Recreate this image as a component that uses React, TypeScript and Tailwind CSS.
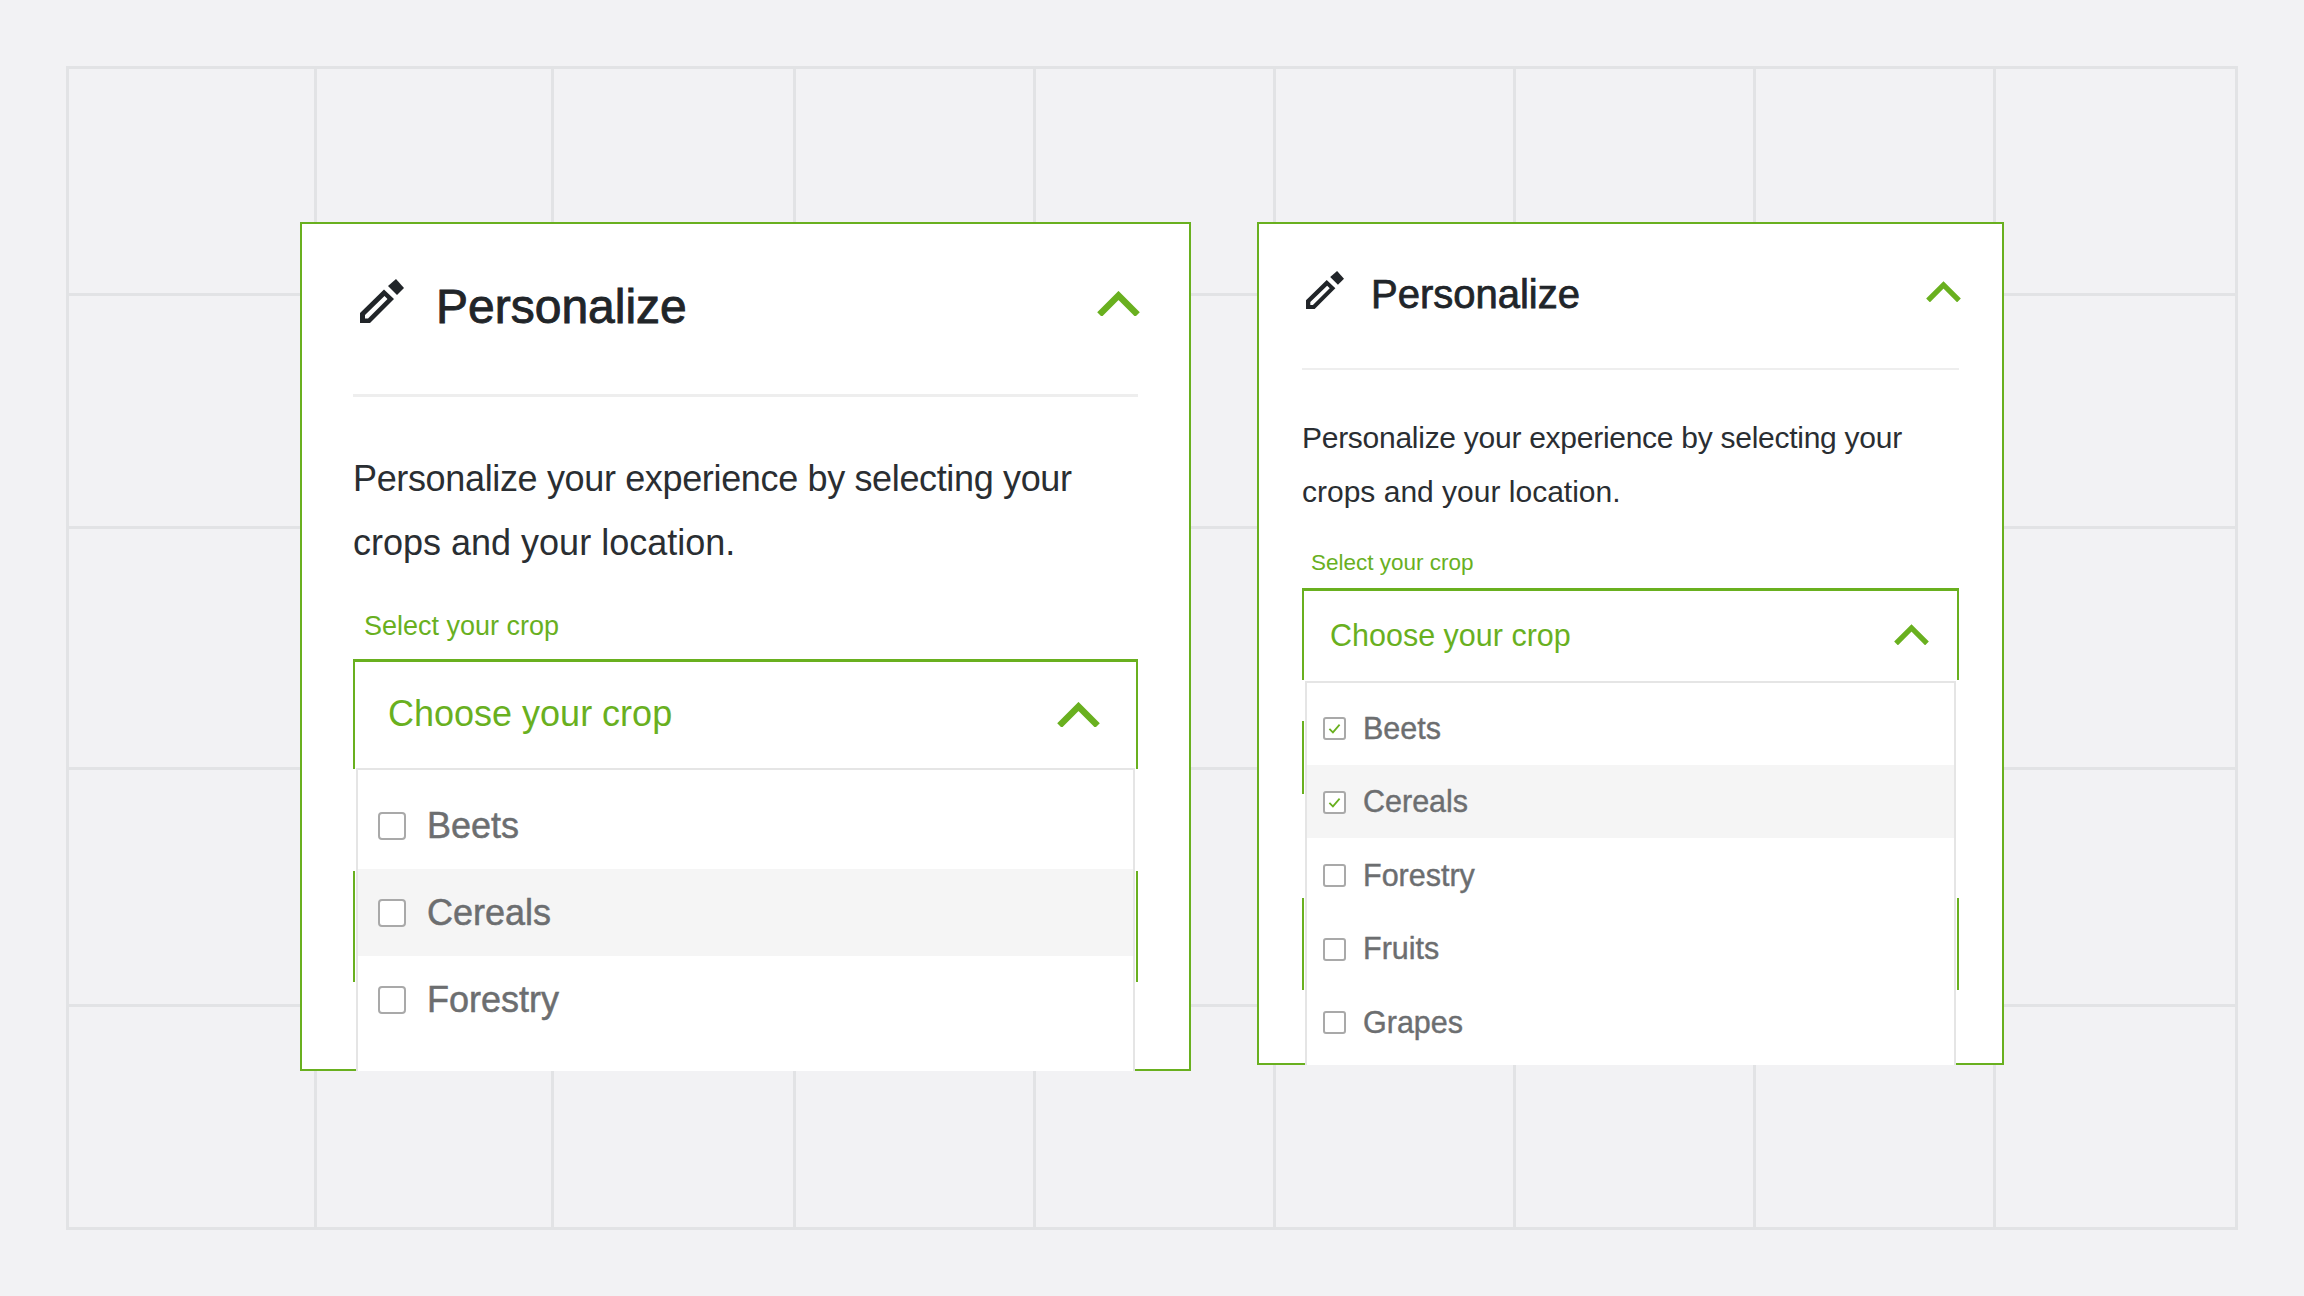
const colW = [248, 237, 242, 240, 240, 240, 240, 240, 239];
const rowH = [227, 233, 241, 237, 220];

function Pencil({ className }: { className: string }) {
  return (
    <svg viewBox="0 0 44 44" className={className} fill="#212529">
      <path
        fillRule="evenodd"
        d="M0 44V34L24 10.5 34 20 10 44ZM5 39.5H8L27.5 20 24.5 17 5 36Z"
      />
      <path d="M36 0 44 9 37 16 28 7Z" />
    </svg>
  );
}

function Chevron({ className }: { className: string }) {
  return (
    <svg viewBox="0 0 43 25" className={className} fill="none" stroke="#69b01f" strokeWidth="6.5">
      <path d="M2.5 23.5 21.5 4.5 40.5 23.5" />
    </svg>
  );
}

function Box({ checked, big }: { checked?: boolean; big?: boolean }) {
  return (
    <span
      className={
        big
          ? "flex h-[28px] w-[28px] shrink-0 items-center justify-center rounded-[4px] border-2 border-[#a9a9a9] bg-white"
          : "flex h-[23px] w-[23px] shrink-0 items-center justify-center rounded-[3px] border-2 border-[#a9a9a9] bg-white"
      }
    >
      {checked && (
        <svg viewBox="0 0 16 14" className="h-[11px] w-[13px]" fill="none" stroke="#69b01f" strokeWidth="2.2">
          <path d="M1.5 7.5 6 12 14.5 2" />
        </svg>
      )}
    </span>
  );
}

const BIG = {
  card: "relative h-[849px] w-[891px] shrink-0 border-2 border-[#69b01f] bg-white px-[51px]",
  header: "relative flex h-[173px] items-start border-b-[3px] border-[#eeeeee] pt-[55px]",
  pencil: "h-[44px] w-[44px] shrink-0 ml-[7px]",
  title: "ml-[32px] mt-[1px] text-[48px] leading-[54px] text-[#212529] [-webkit-text-stroke:0.9px_#212529]",
  topChevron: "absolute right-[-2px] top-[67px] h-[25px] w-[43px]",
  para: "mt-[50px] text-[36px] leading-[64px] text-[#2a2e32]",
  line1: "tracking-[-0.35px]",
  label: "mt-[31px] ml-[11px] text-[27px] leading-[40px] text-[#69b01f]",
  select: "mt-[13px] flex h-[110px] items-center justify-between border-x-2 border-t-[3px] border-[#69b01f] pb-[3px] pl-[33px] pr-[36px]",
  choose: "text-[36px] leading-[44px] text-[#69b01f]",
  chevron: "h-[25px] w-[43px]",
  menu: "absolute bottom-[-2px] left-[54px] right-[54px] top-[544px] overflow-hidden border-x-2 border-t-2 border-[#e5e5e5] bg-white pt-[12px]",
  row: "flex h-[87px] items-center gap-[21px] pl-[20px] pt-[1px] text-[36px] text-[#6c6e70] [-webkit-text-stroke:0.5px_#6c6e70]",
  rowHover: "flex h-[87px] items-center gap-[21px] bg-[#f5f5f5] pl-[20px] pt-[1px] text-[36px] text-[#6c6e70] [-webkit-text-stroke:0.5px_#6c6e70]",
};

const SMALL = {
  card: "relative h-[843px] w-[747px] shrink-0 border-2 border-[#69b01f] bg-white px-[43px]",
  header: "relative flex h-[146px] items-start border-b-2 border-[#eeeeee] pt-[47px]",
  pencil: "h-[38px] w-[38px] shrink-0 ml-[4px]",
  title: "ml-[27px] text-[40px] leading-[46px] text-[#212529] [-webkit-text-stroke:0.75px_#212529]",
  topChevron: "absolute right-[-2px] top-[57px] h-[21px] w-[35px]",
  para: "mt-[41px] text-[30px] leading-[54px] text-[#2a2e32]",
  line1: "tracking-[-0.27px]",
  label: "mt-[27px] ml-[9px] text-[22.5px] leading-[34px] text-[#69b01f]",
  select: "mt-[8px] flex h-[92px] items-center justify-between border-x-2 border-t-[3px] border-[#69b01f] pb-[2px] pl-[26px] pr-[28px]",
  choose: "text-[30.5px] leading-[38px] text-[#69b01f]",
  chevron: "h-[21px] w-[35px]",
  menu: "absolute bottom-[-2px] left-[46px] right-[46px] top-[457px] overflow-hidden border-x-2 border-t-2 border-[#e5e5e5] bg-white pt-[8px]",
  row: "flex h-[73.5px] items-center gap-[17px] pl-[16px] pt-[2px] text-[30.5px] text-[#6c6e70] [-webkit-text-stroke:0.4px_#6c6e70]",
  rowHover: "flex h-[73.5px] items-center gap-[17px] bg-[#f5f5f5] pl-[16px] pt-[2px] text-[30.5px] text-[#6c6e70] [-webkit-text-stroke:0.4px_#6c6e70]",
};

type Item = { name: string; checked?: boolean; hover?: boolean };

function Card({ big, items }: { big: boolean; items: Item[] }) {
  const s = big ? BIG : SMALL;
  return (
    <section className={s.card}>
      <header className={s.header}>
        <Pencil className={s.pencil} />
        <h2 className={s.title}>Personalize</h2>
        <Chevron className={s.topChevron} />
      </header>
      <p className={s.para}>
        <span className={s.line1}>Personalize your experience by selecting your</span>
        <br />
        crops and your location.
      </p>
      <div className={s.label}>Select your crop</div>
      <div className={s.select}>
        <span className={s.choose}>Choose your crop</span>
        <Chevron className={s.chevron} />
      </div>
      {big ? (
        <div className="mt-[102px] h-[111px] border-x-2 border-[#69b01f]" />
      ) : (
        <>
          <div className="mt-[41px] h-[73px] border-l-2 border-[#69b01f]" />
          <div className="mt-[104px] h-[92px] border-x-2 border-[#69b01f]" />
        </>
      )}
      <div className={s.menu}>
        {items.map((item) => (
          <div key={item.name} className={item.hover ? s.rowHover : s.row}>
            <Box checked={item.checked} big={big} />
            <span>{item.name}</span>
          </div>
        ))}
      </div>
    </section>
  );
}

export default function App() {
  return (
    <div className="grid h-[1296px] w-[2304px] overflow-hidden bg-[#f2f2f4] font-['Liberation_Sans',Arial,sans-serif]">
      <div className="col-start-1 row-start-1 pl-[66px] pt-[66px]">
        <div
          className="inline-grid border-[3px] border-[#e2e3e5]"
          style={{
            gridTemplateColumns: colW.map((w) => `${w}px`).join(" "),
            gridTemplateRows: rowH.map((h) => `${h}px`).join(" "),
          }}
        >
          {rowH.flatMap((_, r) =>
            colW.map((_, c) => (
              <div
                key={`${r}-${c}`}
                className={
                  (c < colW.length - 1 ? "border-r-[3px] " : "") +
                  (r < rowH.length - 1 ? "border-b-[3px] " : "") +
                  "border-[#e2e3e5]"
                }
              />
            ))
          )}
        </div>
      </div>
      <div className="col-start-1 row-start-1 flex items-start gap-[66px] pl-[300px] pt-[222px]">
        <Card
          big
          items={[
            { name: "Beets" },
            { name: "Cereals", hover: true },
            { name: "Forestry" },
          ]}
        />
        <Card
          big={false}
          items={[
            { name: "Beets", checked: true },
            { name: "Cereals", checked: true, hover: true },
            { name: "Forestry" },
            { name: "Fruits" },
            { name: "Grapes" },
          ]}
        />
      </div>
    </div>
  );
}
